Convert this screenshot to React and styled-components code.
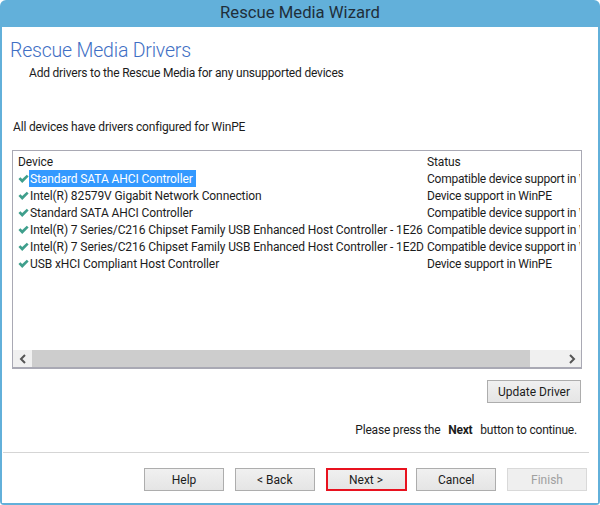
import React from "react";
import styled, { createGlobalStyle } from "styled-components";

const devices = [
  { name: "Standard SATA AHCI Controller", status: "Compatible device support in WinPE", selected: true },
  { name: "Intel(R) 82579V Gigabit Network Connection", status: "Device support in WinPE" },
  { name: "Standard SATA AHCI Controller", status: "Compatible device support in WinPE" },
  { name: "Intel(R) 7 Series/C216 Chipset Family USB Enhanced Host Controller - 1E26", status: "Compatible device support in WinPE" },
  { name: "Intel(R) 7 Series/C216 Chipset Family USB Enhanced Host Controller - 1E2D", status: "Compatible device support in WinPE" },
  { name: "USB xHCI Compliant Host Controller", status: "Device support in WinPE" },
];

const Check = () => (
  <CheckIcon viewBox="0 0 12 10">
    <path d="M0.5 5 L2.6 3 L4.6 5 L9.6 0.3 L11.6 2.2 L4.6 9.4 Z" fill="#3f9f8c" />
  </CheckIcon>
);

const App = () => {
  return (
    <Window>
      <GlobalStyle />
      <TitleBar>Rescue Media Wizard</TitleBar>
      <Body>
        <Heading>Rescue Media Drivers</Heading>
        <SubHeading>Add drivers to the Rescue Media for any unsupported devices</SubHeading>
        <Notice>All devices have drivers configured for WinPE</Notice>

        <DeviceList>
          <ListHeader>
            <DeviceColumn>Device</DeviceColumn>
            <StatusColumn>Status</StatusColumn>
          </ListHeader>
          <Rows>
            {devices.map((device, i) => (
              <Row key={i}>
                <Check />
                <NameCell>
                  <DeviceName $selected={device.selected}>{device.name}</DeviceName>
                </NameCell>
                <StatusCell>{device.status}</StatusCell>
              </Row>
            ))}
          </Rows>
          <ScrollBar>
            <ScrollArrow>
              <svg width="8" height="10" viewBox="0 0 8 10">
                <path d="M6 1 L2 5 L6 9" fill="none" stroke="#555" strokeWidth="2" />
              </svg>
            </ScrollArrow>
            <ScrollTrack>
              <ScrollThumb />
            </ScrollTrack>
            <ScrollArrow>
              <svg width="8" height="10" viewBox="0 0 8 10">
                <path d="M2 1 L6 5 L2 9" fill="none" stroke="#555" strokeWidth="2" />
              </svg>
            </ScrollArrow>
          </ScrollBar>
        </DeviceList>

        <UpdateRow>
          <Button $width={94}>Update Driver</Button>
        </UpdateRow>

        <Hint>
          Please press the <strong>Next</strong> button to continue.
        </Hint>

        <Divider />

        <Footer>
          <Button>Help</Button>
          <Button>&lt; Back</Button>
          <Button $primary>Next &gt;</Button>
          <Button>Cancel</Button>
          <Button disabled>Finish</Button>
        </Footer>
      </Body>
    </Window>
  );
};

const GlobalStyle = createGlobalStyle`
  html, body {
    margin: 0;
    padding: 0;
    background: #ffffff;
  }
  * {
    box-sizing: border-box;
  }
`;

const Window = styled.div`
  width: 600px;
  height: 505px;
  display: flex;
  flex-direction: column;
  background-color: #62b0da;
  border-radius: 6px 6px 4px 4px;
  padding: 0 2px 2px 2px;
  overflow: hidden;
  font-family: Roboto, "Open Sans", sans-serif;
  font-size: 12px;
  color: #1c1c1c;
`;

const TitleBar = styled.div`
  height: 27px;
  flex-shrink: 0;
  text-align: center;
  line-height: 25px;
  font-size: 16.7px;
  color: #1f2f3a;
`;

const Body = styled.div`
  flex: 1;
  display: flex;
  flex-direction: column;
  background-color: #ffffff;
  padding: 0 10px 0 10px;
  min-height: 0;
`;

const Heading = styled.h1`
  margin: 11px 0 0 -2px;
  font-size: 19.5px;
  letter-spacing: -0.2px;
  font-weight: 300;
  line-height: 26px;
  color: #3f6fc4;
`;

const SubHeading = styled.div`
  margin: 1px 0 0 17px;
  line-height: 17px;
  letter-spacing: -0.2px;
`;

const Notice = styled.div`
  margin: 37px 0 0 1px;
  line-height: 17px;
  letter-spacing: -0.18px;
`;

const DeviceList = styled.div`
  margin-top: 14px;
  width: 570px;
  height: 219px;
  display: flex;
  flex-direction: column;
  border: 1px solid #a9a9b4;
  border-bottom-width: 2px;
  overflow: hidden;
  letter-spacing: -0.1px;
`;

const ListHeader = styled.div`
  display: flex;
  height: 19px;
  flex-shrink: 0;
  line-height: 23px;
  padding-left: 5px;
`;

const DeviceColumn = styled.div`
  width: 409px;
`;

const StatusColumn = styled.div`
  white-space: nowrap;
`;

const Rows = styled.div`
  flex: 1;
  min-height: 0;
`;

const Row = styled.div`
  display: flex;
  align-items: center;
  height: 17px;
  padding-left: 5px;
  white-space: nowrap;
`;

const CheckIcon = styled.svg`
  width: 11px;
  height: 10px;
  flex-shrink: 0;
`;

const NameCell = styled.div`
  display: flex;
  width: 398px;
  flex-shrink: 0;
  overflow: hidden;
`;

const DeviceName = styled.span`
  line-height: 16px;
  padding: 1px 2px 0 1px;
  ${(props) =>
    props.$selected &&
    `
    padding-right: 3px;
    background-color: #3399ff;
    color: #ffffff;
  `}
`;

const StatusCell = styled.div`
  width: 153px;
  overflow: hidden;
  letter-spacing: -0.23px;
`;

const ScrollBar = styled.div`
  display: flex;
  height: 17px;
  flex-shrink: 0;
  background-color: #f0f0f0;
`;

const ScrollArrow = styled.div`
  width: 19px;
  flex-shrink: 0;
  display: flex;
  align-items: center;
  justify-content: center;
`;

const ScrollTrack = styled.div`
  flex: 1;
  display: flex;
`;

const ScrollThumb = styled.div`
  width: 498px;
  background-color: #cdcdcd;
`;

const UpdateRow = styled.div`
  display: flex;
  justify-content: flex-end;
  margin: 11px 7px 0 0;
`;

const Hint = styled.div`
  margin: 19px 11px 0 0;
  text-align: right;
  line-height: 17px;
  letter-spacing: -0.2px;

  strong {
    margin: 0 5px;
    font-weight: 700;
  }
`;

const Divider = styled.div`
  margin: 13px -1px 0 -9px;
  height: 1px;
  background-color: #d5d5d5;
`;

const Footer = styled.div`
  display: flex;
  justify-content: flex-end;
  gap: 10.75px;
  margin: 15px 1px 0 0;
`;

const Button = styled.button`
  width: ${(props) => props.$width || 80}px;
  height: 23px;
  padding: 0;
  font-family: inherit;
  font-size: 12px;
  color: #1c1c1c;
  background: linear-gradient(to bottom, #f0f0f0, #e5e5e5);
  border: 1px solid #adadad;
  ${(props) => props.$primary && `
    width: 81px;
    margin-right: -1px;
    border: 2px solid #e8121f;
  `}

  &:disabled {
    color: #a0a0a0;
    background: #efefef;
    border-color: #d9d9d9;
  }
`;

export default App;
